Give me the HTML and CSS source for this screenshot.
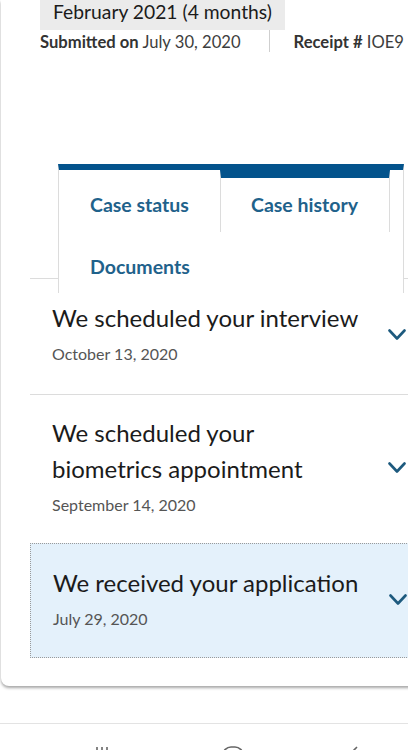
FILE: index.html
```html
<!DOCTYPE html>
<html>
<head>
<meta charset="utf-8">
<link rel="stylesheet" href="styles.css">
</head>
<body>
<div class="card">
  <div class="summary">
    <div class="estimate">February 2021 (4 months)</div>
    <div class="meta">
      <div class="meta-item"><b>Submitted on</b> July 30, 2020</div>
      <div class="meta-divider"></div>
      <div class="meta-item"><b>Receipt #</b> IOE9</div>
    </div>
  </div>
  <div class="tabbar">
    <div class="tabs">
      <div class="tab tab-status">Case status</div>
      <div class="tab tab-history">Case history</div>
      <div class="tab tab-docs">Documents</div>
    </div>
  </div>
  <div class="history">
    <div class="item">
      <div class="item-text">
        <div class="item-title">We scheduled your interview</div>
        <div class="item-date">October 13, 2020</div>
      </div>
      <svg class="chev" width="18" height="12" viewBox="0 0 18 12"><path d="M1.5 1.5 L9 9.5 L16.5 1.5" fill="none" stroke="#1d5a7e" stroke-width="2.6" stroke-linecap="round" stroke-linejoin="round"/></svg>
    </div>
    <div class="item item-last">
      <div class="item-text">
        <div class="item-title">We scheduled your<br>biometrics appointment</div>
        <div class="item-date">September 14, 2020</div>
      </div>
      <svg class="chev" width="18" height="12" viewBox="0 0 18 12"><path d="M1.5 1.5 L9 9.5 L16.5 1.5" fill="none" stroke="#1d5a7e" stroke-width="2.6" stroke-linecap="round" stroke-linejoin="round"/></svg>
    </div>
    <div class="item item-focus">
      <div class="item-text">
        <div class="item-title">We received your application</div>
        <div class="item-date">July 29, 2020</div>
      </div>
      <svg class="chev" width="18" height="12" viewBox="0 0 18 12"><path d="M1.5 1.5 L9 9.5 L16.5 1.5" fill="none" stroke="#1d5a7e" stroke-width="2.6" stroke-linecap="round" stroke-linejoin="round"/></svg>
    </div>
  </div>
</div>
<div class="navbar">
  <svg class="nav-icon nav-recent" width="16" height="16" viewBox="0 0 16 16"><path d="M3 2 V16 M8 2 V16 M13 2 V16" stroke="#666" stroke-width="1.6" fill="none"/></svg>
  <svg class="nav-icon nav-home" width="24" height="24" viewBox="0 0 24 24"><rect x="2" y="2" width="20" height="20" rx="8" stroke="#666" stroke-width="1.6" fill="none"/></svg>
  <svg class="nav-icon nav-back" width="12" height="16" viewBox="0 0 12 16"><path d="M9 2 L3 8 L9 14" stroke="#666" stroke-width="1.6" fill="none"/></svg>
</div>
</body>
</html>
```
FILE: styles.css
```css
html, body {
  margin: 0;
  padding: 0;
}
body {
  width: 408px;
  height: 750px;
  overflow: hidden;
  background: #ffffff;
  font-family: Lato, "Noto Sans", "Liberation Sans", sans-serif;
  color: #1b1b1b;
}
.card {
  width: 430px;
  margin-left: 1px;
  height: 686px;
  background: #fff;
  border-radius: 0 0 8px 8px;
  box-shadow: 0 2px 3px rgba(0, 0, 0, 0.35);
  box-sizing: border-box;
}
.summary {
  padding-left: 39px;
}
.estimate {
  display: inline-block;
  background: #ebebeb;
  height: 30px;
  line-height: 24px;
  padding: 0 13px 0 13px;
  font-size: 19.3px;
  color: #1b1b1b;
  box-sizing: border-box;
}
.meta {
  display: flex;
  align-items: stretch;
  height: 22px;
  white-space: nowrap;
}
.meta-item {
  font-size: 16.6px;
  line-height: 22px;
  color: #3d3d3d;
  padding-top: 1px;
}
.meta-item b {
  font-weight: 700;
  color: #333;
}
.meta-divider {
  width: 1px;
  background: #cfcfcf;
  margin: 0 24px 0 28px;
}
.tabbar {
  margin-top: 112px;
  margin-left: 29px;
  height: 114px;
  border-bottom: 1px solid #dcdcdc;
}
.tabs {
  position: relative;
  margin-left: 28px;
  width: 346px;
  height: 129px;
  background: #fff;
  border-top: 6px solid #03538c;
  border-left: 1px solid #dcdcdc;
  border-right: 1px solid #dcdcdc;
  box-sizing: border-box;
  display: flex;
  flex-wrap: wrap;
  align-content: flex-start;
}
.tab {
  font-weight: 700;
  font-size: 19.5px;
  color: #1f628b;
  box-sizing: border-box;
}
.tab-status {
  width: 161px;
  height: 62px;
  padding-left: 31px;
  padding-top: 23px;
}
.tab-history {
  width: 170px;
  height: 62px;
  border-top: 8px solid #03538c;
  border-left: 1px solid #dcdcdc;
  border-right: 1px solid #dcdcdc;
  padding-left: 30px;
  padding-top: 15px;
}
.tab-docs {
  width: 200px;
  padding-left: 31px;
  padding-top: 23px;
}
.history {
  margin-left: 29px;
}
.item {
  display: flex;
  align-items: center;
  padding: 21px 0 29px 22px;
  border-bottom: 1px solid #dcdcdc;
}
.item-last {
  border-bottom: none;
  padding-top: 20px;
  padding-bottom: 27px;
}
.item-focus {
  background: #e4f1fb;
  border: 1px dotted #9a9a9a;
  padding-top: 21px;
  padding-bottom: 27px;
}
.item-text {
  width: 336px;
}
.item-title {
  font-size: 24px;
  line-height: 36px;
  color: #1b1b1b;
}
.item-date {
  font-size: 16px;
  line-height: 22px;
  color: #555;
  margin-top: 7px;
}
.chev {
  display: block;
  flex: none;
  margin-top: 4px;
}
.navbar {
  margin-top: 37px;
  border-top: 1px solid #e3e3e3;
  height: 40px;
  display: flex;
  align-items: flex-start;
}
.nav-icon {
  display: block;
  margin-top: 21px;
}
.nav-recent {
  margin-left: 94px;
}
.nav-home {
  margin-left: 111px;
}
.nav-back {
  margin-left: 103px;
}
```
